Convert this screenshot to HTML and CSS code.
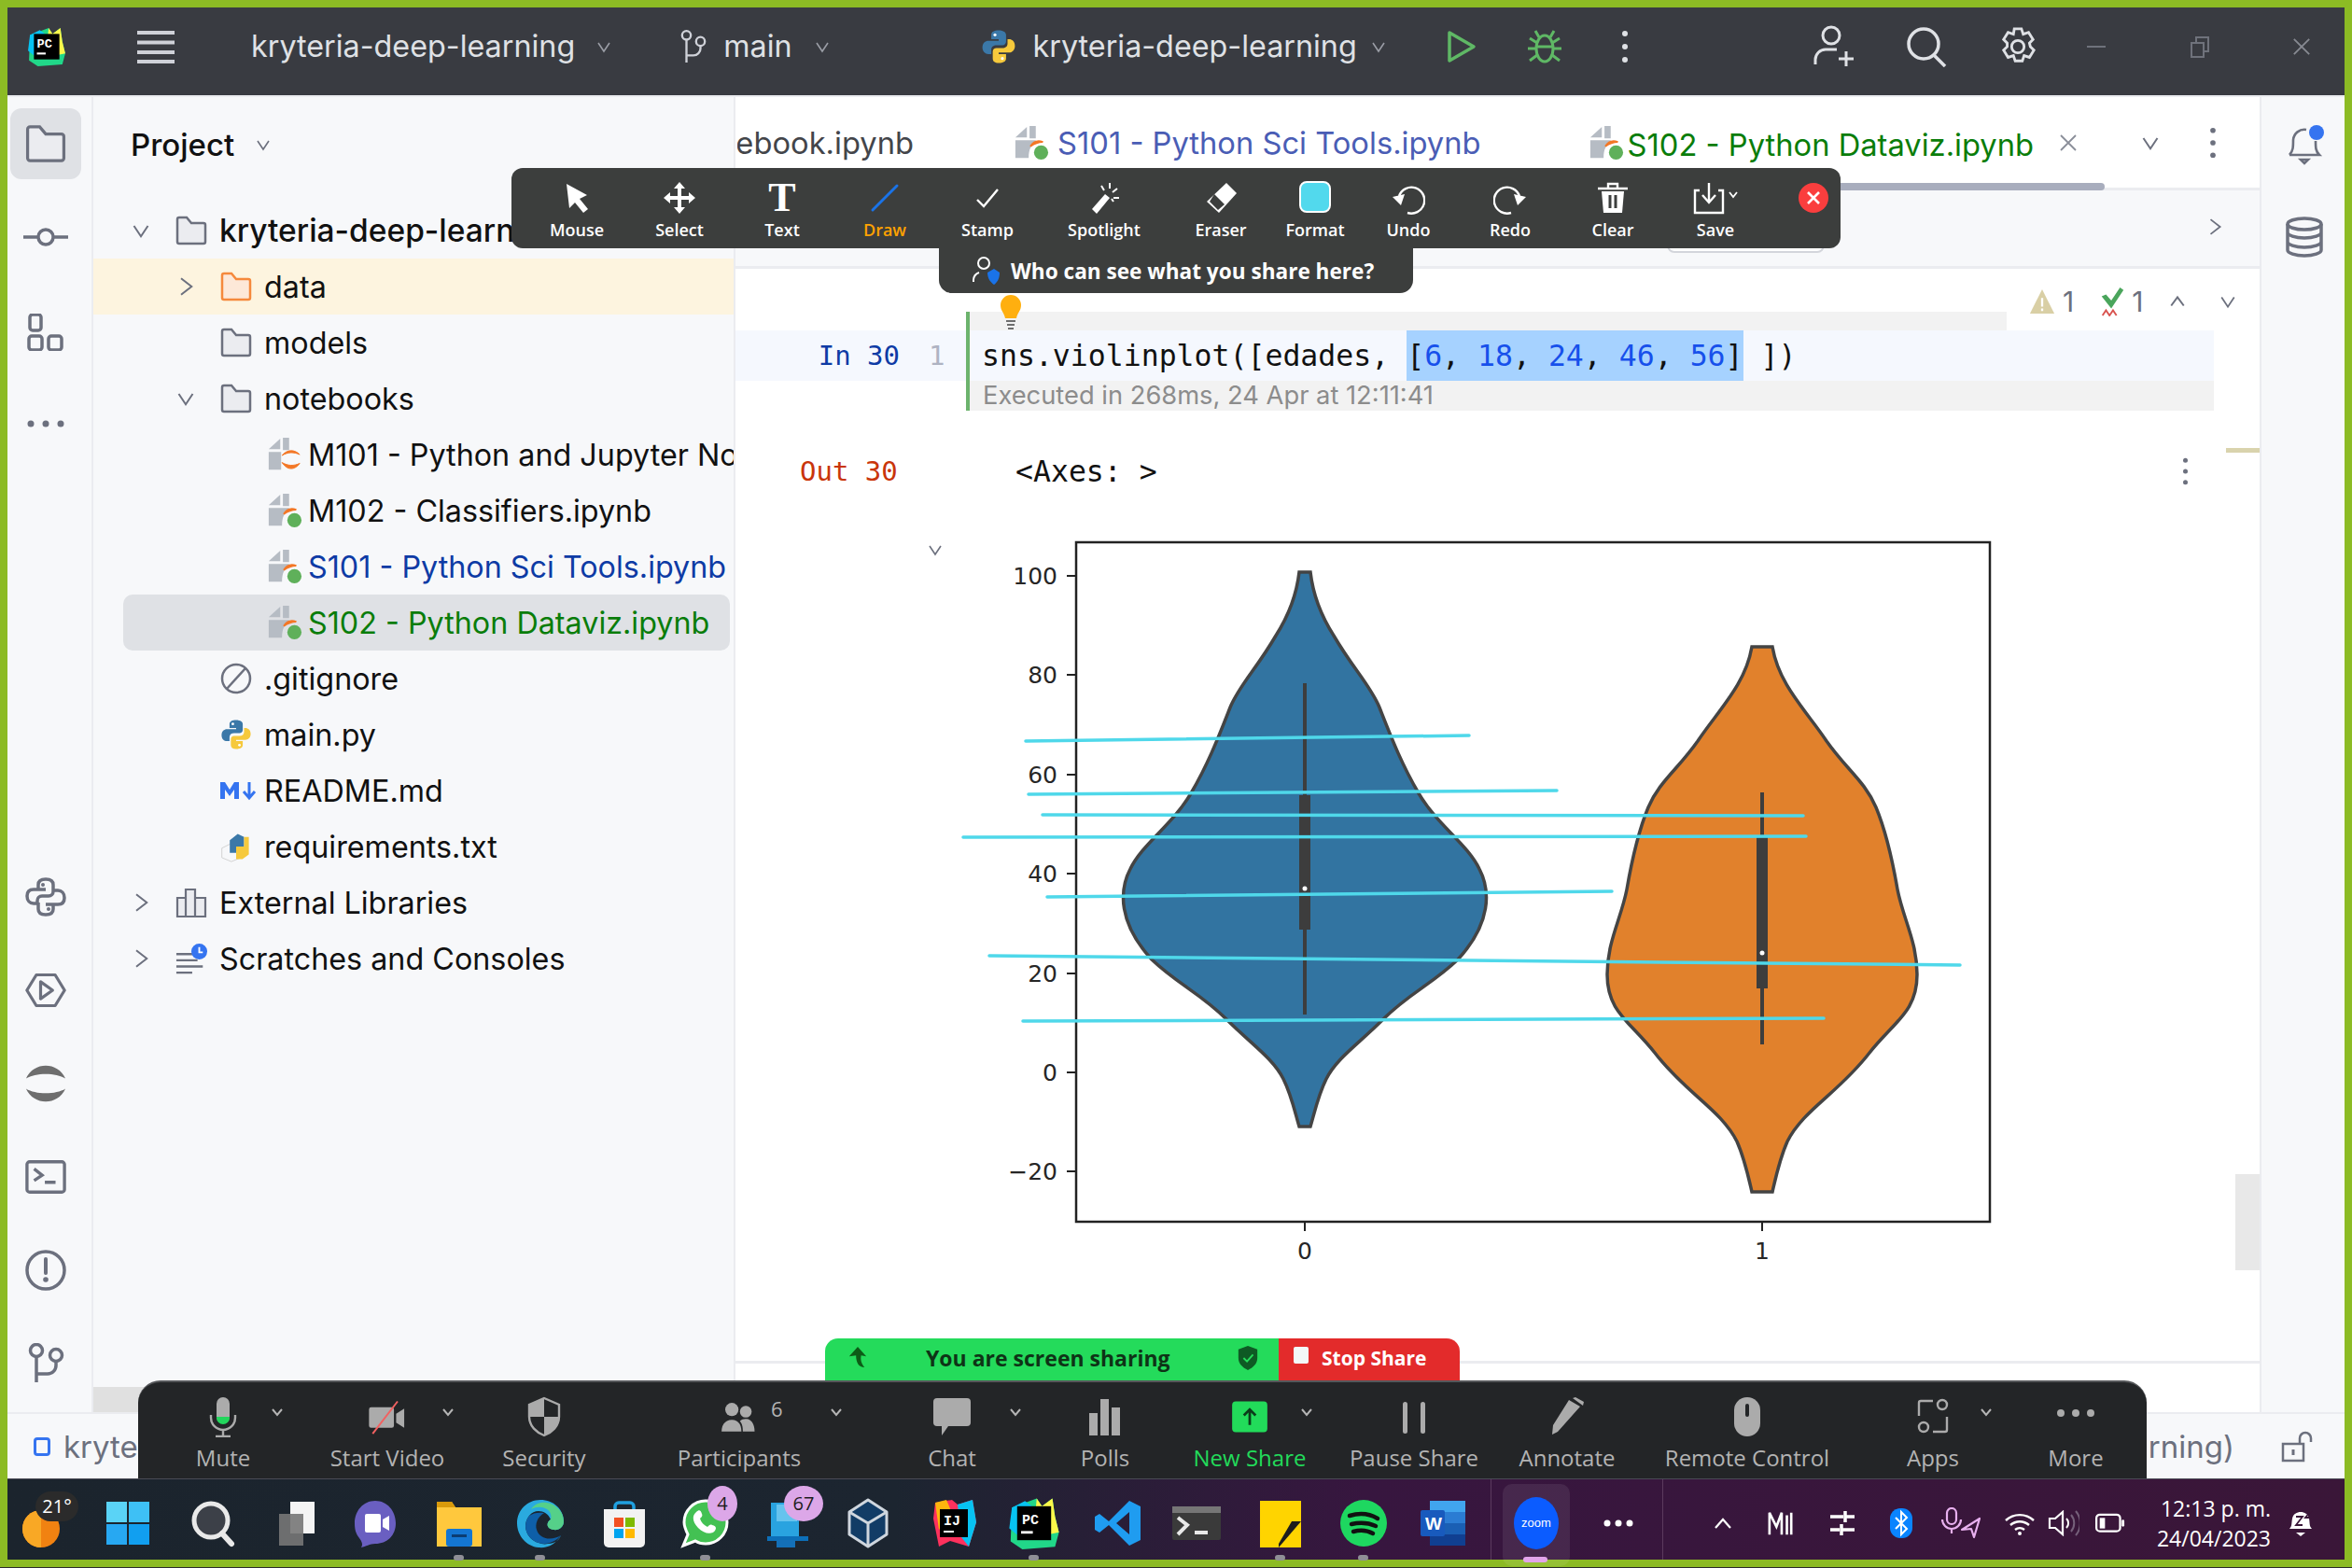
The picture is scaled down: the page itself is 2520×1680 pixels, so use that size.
FILE: index.html
```html
<!DOCTYPE html>
<html lang="en">
<head>
<meta charset="UTF-8">
<title>PyCharm screen share</title>
<link rel="stylesheet" href="styles.css">
</head>
<body>
<svg class="defs" width="0" height="0">
  <symbol id="down" viewBox="0 0 16 16"><path d="M2 4l6 9 6-9" fill="none" stroke="currentColor" stroke-width="1.6"/></symbol>
  <symbol id="right" viewBox="0 0 16 16"><path d="M4 1l9 7-9 7" fill="none" stroke="currentColor" stroke-width="1.6"/></symbol>
  <symbol id="folder" viewBox="0 0 34 34"><path d="M2 5a2 2 0 0 1 2-2h8l5 6h13a2 2 0 0 1 2 2v18a2 2 0 0 1-2 2H4a2 2 0 0 1-2-2z" fill="#ebecf0" stroke="#6c707e" stroke-width="2.5"/></symbol>
  <symbol id="nb" viewBox="0 0 40 40"><path d="M2 14L15 2v12zM18 1h7v14H18zM2 17h23v3c-5 2-8 7-8 17H2z" fill="#b6bcc4"/><path d="M19 24c3-5 8-7 14-5-5 0-10 2-14 5z" fill="#f37726" stroke="#f37726" stroke-width="2"/><circle cx="31" cy="31" r="8" fill="#5fb05a"/></symbol>
  <symbol id="py" viewBox="0 0 24 24"><path d="M12 1C9 1 7 2 7 4v3h5v1H5C3 8 1 9.500 1 12.500S3 17 5 17h2v-3c0-2 1.500-3 3.500-3h4c1.500 0 2.500-1 2.500-2.500V4c0-2-2.500-3-5-3z" fill="#3b78a8"/><path d="M12 23c3 0 5-1 5-3v-3h-5v-1h7c2 0 4-1.500 4-4.500S21 7 19 7h-1v3c0 2-1.500 3-3.500 3h-4C9 13 8 14 8 15.500V20c0 2 1.500 3 4 3z" fill="#f6c93c"/><circle cx="9.500" cy="4" r="1" fill="#fff"/><circle cx="14.500" cy="20" r="1" fill="#fff"/></symbol>
  <symbol id="pc" viewBox="0 0 40 40"><path d="M3 8L22 1l4 6 8-6 2 14 3 12-3 11-25 2-9-6z" fill="#21d789"/><path d="M22 1l4 6 8-6 2 14 3 12-20 4z" fill="#fcf84a"/><path d="M3 8l10-5 8 6-14 20-6-5z" fill="#07c3f2"/><rect x="7" y="7" width="26" height="26" fill="#000"/><rect x="10" y="26" width="9" height="2" fill="#fff"/></symbol>
</svg>

<div class="titlebar">
  <svg class="t-logo" viewBox="0 0 40 40"><use href="#pc"/><text x="10" y="21" class="pc-text">PC</text></svg>
  <svg class="t-menu" viewBox="0 0 40 40"><path d="M0 5h40M0 15.500h40M0 26h40M0 36h40" stroke="#cfd1d8" stroke-width="4"/></svg>
  <span class="t-name t-project">kryteria-deep-learning</span>
  <svg class="t-chev t-chev-a"><use href="#down"/></svg>
  <svg class="t-branch" viewBox="0 0 32 40"><path d="M8 12v26M8 30h8a8 8 0 0 0 8-8v-2" fill="none" stroke="#cfd1d8" stroke-width="2.500"/><circle cx="8" cy="7" r="5" fill="none" stroke="#cfd1d8" stroke-width="2.500"/><circle cx="24" cy="14" r="5" fill="none" stroke="#cfd1d8" stroke-width="2.500"/></svg>
  <span class="t-name">main</span>
  <svg class="t-chev t-chev-b"><use href="#down"/></svg>
  <svg class="t-py"><use href="#py"/></svg>
  <span class="t-name">kryteria-deep-learning</span>
  <svg class="t-chev t-chev-c"><use href="#down"/></svg>
  <svg class="t-run" viewBox="0 0 34 36"><path d="M4 3l26 15L4 33z" fill="none" stroke="#5fb865" stroke-width="3.500" stroke-linejoin="round"/></svg>
  <svg class="t-bug" viewBox="0 0 38 38"><g fill="none" stroke="#5fb865" stroke-width="3"><ellipse cx="19" cy="21" rx="9" ry="14"/><path d="M10 19h18M13 9l-4-7M25 9l4-7M1 21h9M28 21h9M3 10l8 5M35 10l-8 5M3 34l8-6M35 34l-8-6"/></g></svg>
  <svg class="t-dots" viewBox="0 0 8 36"><circle cx="4" cy="4" r="3" fill="#dfe1e5"/><circle cx="4" cy="18" r="3" fill="#dfe1e5"/><circle cx="4" cy="32" r="3" fill="#dfe1e5"/></svg>
  <svg class="t-user" viewBox="0 0 46 46"><g fill="none" stroke="#dfe1e5" stroke-width="3"><circle cx="20" cy="11" r="9"/><path d="M3 42v-5a11 11 0 0 1 11-11h12M36 28v16M28 36h16"/></g></svg>
  <svg class="t-search" viewBox="0 0 44 44"><g fill="none" stroke="#dfe1e5" stroke-width="3.500"><circle cx="19" cy="19" r="16"/><path d="M30 31l12 12"/></g></svg>
  <svg class="t-gear" viewBox="0 0 44 44"><g fill="none" stroke="#dfe1e5" stroke-width="3"><circle cx="22" cy="22" r="7"/><path d="M18 2h8l2 6 6-2 5 8-4 4 1 4 4 4-5 8-6-2-2 6h-8l-2-6-6 2-5-8 4-4 0-4-4-4 5-8 6 2z"/></g></svg>
  <span class="t-min"></span>
  <svg class="t-restore" viewBox="0 0 24 24"><path d="M3 8h13v15H3zM8 8V2h13v15h-5" fill="none" stroke="#6f727b" stroke-width="2"/></svg>
  <svg class="t-close" viewBox="0 0 22 22"><path d="M2 2l18 18M20 2L2 20" stroke="#878a92" stroke-width="2"/></svg>
</div>

<div class="main">
  <div class="strip-left">
    <div class="strip-group">
      <div class="strip-active"><svg class="s-icon" viewBox="0 0 34 34"><use href="#folder"/></svg></div>
      <svg class="s-icon s-commit" viewBox="0 0 50 34"><g fill="none" stroke="#6c707e" stroke-width="3.500"><circle cx="25" cy="17" r="8"/><path d="M1 17h16M33 17h16"/></g></svg>
      <svg class="s-icon s-plug" viewBox="0 0 40 40"><g fill="none" stroke="#6c707e" stroke-width="3.500"><rect x="3" y="1" width="12" height="17" rx="3"/><rect x="2" y="24" width="14" height="15" rx="3"/><rect x="23" y="24" width="14" height="15" rx="3"/></g></svg>
      <svg class="s-icon s-more" viewBox="0 0 40 8"><circle cx="4" cy="4" r="3.500" fill="#6c707e"/><circle cx="20" cy="4" r="3.500" fill="#6c707e"/><circle cx="36" cy="4" r="3.500" fill="#6c707e"/></svg>
    </div>
    <div class="strip-group">
      <svg class="s-icon" viewBox="0 0 44 44"><g fill="none" stroke="#6c707e" stroke-width="3.500"><path d="M14 14V9c0-4 3-6 8-6s8 2 8 6v7c0 3-2 5-5 5h-7c-3 0-5 2-5 5v3H9c-4 0-7-3-7-8s3-7 7-7h13"/><path d="M30 30v5c0 4-3 6-8 6s-8-2-8-6v-7M30 15h5c4 0 7 3 7 8s-3 7-7 7H22"/></g><circle cx="19" cy="9" r="2" fill="#6c707e"/><circle cx="25" cy="35" r="2" fill="#6c707e"/></svg>
      <svg class="s-icon s-gap" viewBox="0 0 48 40"><g fill="none" stroke="#6c707e" stroke-width="3.500" stroke-linejoin="round"><path d="M13 2h22l11 18-11 18H13L2 20z"/><path d="M18 10l14 10-14 10z"/></g></svg>
      <svg class="s-icon s-gap" viewBox="0 0 48 44"><path d="M1 16C10 -4 38 -4 47 16 36 9 12 9 1 16zM1 28C10 48 38 48 47 28 36 35 12 35 1 28z" fill="#6e6e6e"/></svg>
      <svg class="s-icon s-gap" viewBox="0 0 46 38"><g fill="none" stroke="#6c707e" stroke-width="3.500"><rect x="2" y="2" width="42" height="34" rx="3"/><path d="M10 10l9 7-9 6M22 25h12"/></g></svg>
      <svg class="s-icon s-gap" viewBox="0 0 44 44"><circle cx="22" cy="22" r="20" fill="none" stroke="#6c707e" stroke-width="3.500"/><path d="M22 10v15" stroke="#6c707e" stroke-width="4" stroke-linecap="round"/><circle cx="22" cy="32" r="2.800" fill="#6c707e"/></svg>
      <svg class="s-icon s-gap" viewBox="0 0 40 44"><g fill="none" stroke="#6c707e" stroke-width="3.500"><circle cx="10" cy="8" r="6.500"/><circle cx="31" cy="13" r="6.500"/><path d="M10 15v27M10 33h12a9 9 0 0 0 9-9v-4"/></g></svg>
    </div>
  </div>

  <div class="project">
    <div class="project-head"><span class="project-title">Project</span><svg class="p-chev"><use href="#down"/></svg></div>
    <div class="row"><svg class="chev"><use href="#down"/></svg><svg class="ico"><use href="#folder"/></svg><span class="bold-name">kryteria-deep-learning</span></div>
    <div class="row l2 excluded"><svg class="chev"><use href="#right"/></svg><svg class="ico" viewBox="0 0 34 34"><path d="M2 5a2 2 0 0 1 2-2h8l5 6h13a2 2 0 0 1 2 2v18a2 2 0 0 1-2 2H4a2 2 0 0 1-2-2z" fill="#fde8d8" stroke="#f5893c" stroke-width="2.500"/></svg><span>data</span></div>
    <div class="row l2"><span class="chev"></span><svg class="ico"><use href="#folder"/></svg><span>models</span></div>
    <div class="row l2"><svg class="chev"><use href="#down"/></svg><svg class="ico"><use href="#folder"/></svg><span>notebooks</span></div>
    <div class="row l3"><span class="chev"></span><svg class="ico" viewBox="0 0 40 40"><path d="M2 14L15 2v12zM18 1h7v14H18zM2 17h14v20H2z" fill="#b6bcc4"/><path d="M17 21c6-7 14-7 20-1-7-3-13-3-20 1zM17 29c6 9 14 9 20 1-7 3-13 3-20-1z" fill="#f37726" stroke="#f37726"/></svg><span>M101 - Python and Jupyter Notebook.ipynb</span></div>
    <div class="row l3"><span class="chev"></span><svg class="ico" viewBox="0 0 40 40"><use href="#nb"/></svg><span>M102 - Classifiers.ipynb</span></div>
    <div class="row l3 changed"><span class="chev"></span><svg class="ico" viewBox="0 0 40 40"><use href="#nb"/></svg><span>S101 - Python Sci Tools.ipynb</span></div>
    <div class="row l3 added selected"><span class="chev"></span><svg class="ico" viewBox="0 0 40 40"><use href="#nb"/></svg><span>S102 - Python Dataviz.ipynb</span></div>
    <div class="row l2"><span class="chev"></span><svg class="ico" viewBox="0 0 34 34"><circle cx="17" cy="17" r="15" fill="none" stroke="#6c707e" stroke-width="2.500"/><path d="M7 28L27 6" stroke="#6c707e" stroke-width="2.500"/></svg><span>.gitignore</span></div>
    <div class="row l2"><span class="chev"></span><svg class="ico"><use href="#py"/></svg><span>main.py</span></div>
    <div class="row l2"><span class="chev"></span><svg class="ico ico-md" viewBox="0 0 40 22"><path d="M1 20V2h5l5 8 5-8h5v18h-5V10l-5 7-5-7v10z" fill="#3574f0"/><path d="M32 2v15M26 12l6 7 6-7" fill="none" stroke="#3574f0" stroke-width="3"/></svg><span>README.md</span></div>
    <div class="row l2"><span class="chev"></span><svg class="ico" viewBox="0 0 40 40"><path d="M2 22l12-6 12 6v12l-12 5-12-5z" fill="none" stroke="#ccc" stroke-width="1"/><path d="M12 12l10-8 8 4v12H20v8h-8z" fill="#3b78a8"/><path d="M22 22h14V8l-6 0v12H20v16h8l8-6V22z" fill="#f6c93c"/></svg><span>requirements.txt</span></div>
    <div class="row"><svg class="chev"><use href="#right"/></svg><svg class="ico" viewBox="0 0 34 34"><path d="M2 12h9v20H2zM11 3h10v29H11zM21 12h11v20H21z" fill="#ebecf0" stroke="#6c707e" stroke-width="2.200"/></svg><span>External Libraries</span></div>
    <div class="row"><svg class="chev"><use href="#right"/></svg><svg class="ico" viewBox="0 0 36 34"><path d="M1 12h18M1 19h24M1 26h30M1 33h18" stroke="#6c707e" stroke-width="2.500"/><circle cx="27" cy="9" r="9" fill="#3574f0"/><path d="M27 4v6h4" stroke="#fff" stroke-width="2" fill="none"/></svg><span>Scratches and Consoles</span></div>
    <div class="project-scroll"></div>
  </div>

  <div class="editor">
    <div class="tabs">
      <div class="tab-clipped"><span>Notebook.ipynb</span></div>
      <svg class="tab-ico tab-ico-a" viewBox="0 0 40 40"><use href="#nb"/></svg><span class="tab-blue">S101 - Python Sci Tools.ipynb</span>
      <svg class="tab-ico tab-ico-b" viewBox="0 0 40 40"><use href="#nb"/></svg><span class="tab-green">S102 - Python Dataviz.ipynb</span>
      <svg class="tab-x" viewBox="0 0 20 20"><path d="M2 2l16 16M18 2L2 18" stroke="#8a8e99" stroke-width="1.800"/></svg>
      <svg class="tab-list"><use href="#down"/></svg>
      <svg class="tab-dots" viewBox="0 0 8 36"><circle cx="4" cy="4" r="3" fill="#6c707e"/><circle cx="4" cy="18" r="3" fill="#6c707e"/><circle cx="4" cy="32" r="3" fill="#6c707e"/></svg>
      <div class="tab-underline"></div>
    </div>
    <div class="nb-toolbar">
      <div class="nb-button"></div>
      <svg class="nb-next"><use href="#right"/></svg>
    </div>
    <div class="notebook">
      <div class="inspect">
        <svg class="in-warn" viewBox="0 0 30 30"><path d="M15 1l14 28H1z" fill="#d9cfa5"/><path d="M15 11v10M15 23v3" stroke="#fff" stroke-width="2.500"/></svg><span>1</span>
        <svg class="in-ok" viewBox="0 0 32 34"><path d="M4 11l5-2 6 7L25 1l4 3-14 21z" fill="#4aa55c"/><path d="M5 33l4-6 4 6 4-6 4 6" stroke="#d9534f" fill="none" stroke-width="2"/></svg><span>1</span>
        <svg class="in-up" viewBox="0 0 16 16"><path d="M2 12l6-8 6 8" fill="none" stroke="#6c707e" stroke-width="1.800"/></svg>
        <svg class="in-down"><use href="#down"/></svg>
      </div>
      <svg class="bulb" viewBox="0 0 24 40"><path d="M12 1a11 11 0 0 1 11 11c0 6-4 8-5 14H6C5 20 1 18 1 12A11 11 0 0 1 12 1z" fill="#ffaf0f"/><path d="M7 29h10M8 33h8M9 37h6" stroke="#6e6e6e" stroke-width="2"/></svg>
      <div class="cell-top"></div>
      <div class="cell-line">
        <span class="prompt">In 30</span><span class="lineno">1</span>
        <code class="code">sns.violinplot([edades, <span class="sel">[<i>6</i>, <i>18</i>, <i>24</i>, <i>46</i>, <i>56</i>]</span> ])</code>
      </div>
      <div class="exec">Executed in 268ms, 24 Apr at 12:11:41</div>
      <div class="out-row">
        <span class="out-prompt">Out 30</span>
        <code class="out-text">&lt;Axes: &gt;</code>
        <svg class="out-dots" viewBox="0 0 8 36"><circle cx="4" cy="4" r="3" fill="#6c707e"/><circle cx="4" cy="18" r="3" fill="#6c707e"/><circle cx="4" cy="32" r="3" fill="#6c707e"/></svg>
      </div>
      <div class="plot-row">
        <svg class="plot-fold"><use href="#down"/></svg>
        <svg class="plot" viewBox="1020 570 1160 790">
          <rect x="1153" y="582" width="979" height="728" fill="#fff" stroke="#222" stroke-width="2.500"/>
          <g stroke="#222" stroke-width="2">
            <path d="M1143 618h10M1143 724h10M1143 831h10M1143 937h10M1143 1044h10M1143 1150h10M1143 1256h10M1398 1310v10M1888 1310v10"/>
          </g>
          <g class="tick" text-anchor="end">
            <text x="1133" y="627">100</text><text x="1133" y="733">80</text><text x="1133" y="840">60</text><text x="1133" y="946">40</text><text x="1133" y="1053">20</text><text x="1133" y="1159">0</text><text x="1133" y="1265">−20</text>
          </g>
          <g class="tick" text-anchor="middle"><text x="1398" y="1350">0</text><text x="1888" y="1350">1</text></g>
          <path d="M1392 614L1404 614C1407 640 1415 660 1429 682C1450 718 1468 735 1478 759C1492 795 1503 822 1520 851C1540 885 1572 905 1585 932C1597 955 1598 990 1562 1029C1535 1055 1510 1065 1482 1093C1455 1120 1432 1135 1421 1157C1412 1175 1408 1195 1404 1208L1392 1208C1388 1195 1384 1175 1375 1157C1364 1135 1341 1120 1314 1093C1286 1065 1261 1055 1234 1029C1198 990 1199 955 1211 932C1224 905 1256 885 1276 851C1293 822 1304 795 1318 759C1328 735 1346 718 1367 682C1381 660 1389 640 1392 614Z" fill="#3274a1" stroke="#444" stroke-width="3.500"/>
          <path d="M1877 694L1899 694C1906 735 1935 762 1957 795C1978 825 1998 838 2010 866C2020 890 2028 925 2033 954C2039 985 2054 1010 2054 1045C2054 1085 2030 1095 2003 1129C1970 1172 1932 1190 1915 1224C1907 1242 1903 1260 1899 1278L1877 1278C1873 1260 1869 1242 1861 1224C1844 1190 1806 1172 1773 1129C1746 1095 1722 1085 1722 1045C1722 1010 1737 985 1743 954C1748 925 1756 890 1766 866C1778 838 1798 825 1819 795C1841 762 1870 735 1877 694Z" fill="#e1812c" stroke="#444" stroke-width="3.500"/>
          <path d="M1398 733V1088M1888 850V1120" stroke="#3d3d3d" stroke-width="4"/>
          <path d="M1398 853V997M1888 898V1060" stroke="#3d3d3d" stroke-width="12"/>
          <circle cx="1398" cy="953" r="2.500" fill="#fff"/><circle cx="1888" cy="1022" r="2.500" fill="#fff"/>
          <g stroke="#4fd8ea" stroke-width="3.500" stroke-linecap="round">
            <path d="M1099 795L1574 789M1102 852L1668 848M1117 874L1932 875M1032 898L1935 897M1122 962L1727 956M1060 1025L2100 1035M1096 1095L1954 1092"/>
          </g>
        </svg>
      </div>
      <div class="margin-mark"></div>
      <div class="v-scroll"></div>
      <div class="nb-foot"></div>
    </div>
  </div>

  <div class="strip-right">
    <svg class="r-bell" viewBox="0 0 44 44"><path d="M6 33c4-4 4-9 4-16a12 12 0 0 1 14-11M34 18c0 7 0 11 4 15H6M18 38h8l-4 4z" fill="none" stroke="#6c707e" stroke-width="2.600"/><circle cx="35" cy="9" r="8" fill="#3574f0"/></svg>
    <svg class="r-db" viewBox="0 0 40 44"><g fill="none" stroke="#6c707e" stroke-width="3.500"><ellipse cx="20" cy="8" rx="18" ry="6"/><path d="M2 8v28c0 3 8 6 18 6s18-3 18-6V8M2 17c0 3 8 6 18 6s18-3 18-6M2 27c0 3 8 6 18 6s18-3 18-6"/></g></svg>
  </div>
</div>

<div class="statusbar">
  <span class="st-left"><span class="st-box"></span>kryteria</span>
  <span class="st-right">rning)</span>
  <svg class="st-lock" viewBox="0 0 34 34"><path d="M2 14h22v18H2z" fill="none" stroke="#6c707e" stroke-width="2.500"/><path d="M13 20v6" stroke="#6c707e" stroke-width="3"/><path d="M20 14V8a6 6 0 0 1 12 0v4" fill="none" stroke="#6c707e" stroke-width="2.500"/></svg>
</div>

<div class="taskbar">
  <div class="tb-apps">
    <div class="tb-slot"><svg viewBox="0 0 56 56"><circle cx="27" cy="34" r="20" fill="#f18211"/><path d="M27 14a20 20 0 0 0 0 40z" fill="#f9a825"/></svg><span class="tb-temp">21°</span></div>
    <div class="tb-slot"><svg viewBox="0 0 56 56"><path d="M5 5h22v22H5z" fill="#5ad3f6"/><path d="M29 5h22v22H29z" fill="#3ec0f5"/><path d="M5 29h22v22H5z" fill="#27a8f2"/><path d="M29 29h22v22H29z" fill="#119ff0"/></svg></div>
    <div class="tb-slot"><svg viewBox="0 0 56 56"><circle cx="25" cy="25" r="18" fill="#3c4048" stroke="#e9e9e9" stroke-width="5"/><path d="M37 39l10 11" stroke="#e9e9e9" stroke-width="6" stroke-linecap="round"/></svg></div>
    <div class="tb-slot"><svg viewBox="0 0 56 56"><rect x="22" y="5" width="26" height="34" fill="#f4f4f4"/><rect x="10" y="18" width="26" height="34" fill="#777" opacity=".9"/></svg></div>
    <div class="tb-slot"><svg viewBox="0 0 56 56"><path d="M28 4c13 0 22 11 22 24s-9 22-22 22c-6 0-10 3-15 4 2-3 1-6-2-10C7 39 6 34 6 28 6 15 15 4 28 4z" fill="#6a5fc1"/><rect x="17" y="18" width="17" height="20" rx="2" fill="#fff"/><path d="M36 24l7-4v16l-7-4z" fill="#fff"/></svg></div>
    <div class="tb-slot"><svg viewBox="0 0 56 56"><path d="M4 5h16l4 6h28v42H4z" fill="#ffc83d"/><path d="M4 5h16l4 6H4z" fill="#d99a0b"/><rect x="14" y="34" width="28" height="19" rx="3" fill="#1476d2"/><rect x="20" y="40" width="16" height="3" fill="#0b3d73"/></svg><span class="tb-run"></span></div>
    <div class="tb-slot"><svg viewBox="0 0 56 56"><path d="M28 3c14 0 25 10 25 23 0 6-5 10-11 9-8-1-8-8-3-11C35 14 22 12 16 20 8 30 13 45 26 49c3 1 6 2 10 1 9 0 13-6 14-9-5 9-14 14-24 13C13 53 3 41 3 28 3 14 14 3 28 3z" fill="#2aaadf"/><path d="M53 26c0 6-5 10-11 9-8-1-8-8-3-11 3-10-9-17-21-11C28 -2 53 8 53 26z" fill="#55d089"/><path d="M16 20C8 30 13 45 26 49c10 3 19-2 24-8-8 5-22 6-26-6-2-6 1-14 8-18-6-1-12 0-16 3z" fill="#0e5fa8"/></svg><span class="tb-run"></span></div>
    <div class="tb-slot"><svg viewBox="0 0 56 56"><path d="M18 16v-6a4 4 0 0 1 4-4h12a4 4 0 0 1 4 4v6" fill="none" stroke="#20a0e0" stroke-width="3.500"/><path d="M6 13h44v36a5 5 0 0 1-5 5H11a5 5 0 0 1-5-5z" fill="#f2f2f2"/><rect x="17" y="22" width="10" height="10" fill="#f25022"/><rect x="29" y="22" width="10" height="10" fill="#7fba00"/><rect x="17" y="34" width="10" height="10" fill="#00a4ef"/><rect x="29" y="34" width="10" height="10" fill="#ffb900"/></svg></div>
    <div class="tb-slot"><svg viewBox="0 0 56 56"><path d="M28 4a23 23 0 0 1 0 46c-4 0-8-1-11-3L4 52l5-12C7 36 5 32 5 27A23 23 0 0 1 28 4z" fill="#43c153" stroke="#fff" stroke-width="3"/><path d="M18 16c3-3 5-2 6 2 1 2 0 3-2 5 1 4 4 7 8 9 2-2 3-3 5-2 4 1 5 3 3 6-4 5-12 3-18-3-6-6-7-13-2-17z" fill="#fff"/></svg><span class="tb-badge tb-badge-a">4</span><span class="tb-run"></span></div>
    <div class="tb-slot"><svg viewBox="0 0 56 56"><path d="M10 6h30v40H10z" fill="#29a3e0"/><path d="M6 42h44v5H6z" fill="#0c6fb8"/><path d="M16 46h20v8H16z" fill="#1470b8"/><path d="M16 8h22v18H16z" fill="#66c3ee"/></svg><span class="tb-badge tb-badge-b">67</span></div>
    <div class="tb-slot"><svg viewBox="0 0 56 56"><path d="M28 3l20 13v24L28 53 8 40V16z" fill="#123c66" stroke="#cfd6de" stroke-width="3" stroke-linejoin="round"/><path d="M8 16l20 12 20-12M28 28v25" fill="none" stroke="#cfd6de" stroke-width="3"/></svg></div>
    <div class="tb-slot"><svg viewBox="0 0 56 56"><path d="M8 6l18-3 6 5 16-5 4 24-8 26-20-6-12 6-6-30z" fill="#fe315d"/><path d="M32 8l16-5 4 24-8 26-8-10z" fill="#07c3f2"/><path d="M8 6l12-3 6 14-14 18z" fill="#fdb60d"/><rect x="13" y="13" width="30" height="30" fill="#000"/><text x="17" y="30" class="ide-text">IJ</text><rect x="17" y="36" width="11" height="2" fill="#fff"/></svg></div>
    <div class="tb-slot"><svg viewBox="0 0 56 56"><use href="#pc" width="56" height="56"/><text x="15" y="29" class="ide-text">PC</text></svg><span class="tb-run"></span></div>
    <div class="tb-slot"><svg viewBox="0 0 56 56"><path d="M40 4l12 6v36l-12 6-22-22-10 8-5-3V21l5-3 10 8zM40 16L26 28l14 12z" fill="#1f9cf0"/></svg></div>
    <div class="tb-slot"><svg viewBox="0 0 56 56"><rect x="0" y="10" width="52" height="36" rx="2" fill="#3a3a3a"/><path d="M0 10h52v7H0z" fill="#767676"/><path d="M6 22l10 8-10 10" fill="none" stroke="#e8e8e8" stroke-width="4"/><rect x="24" y="36" width="14" height="4" fill="#e8e8e8"/></svg></div>
    <div class="tb-slot"><svg viewBox="0 0 56 56"><rect x="6" y="4" width="44" height="50" fill="#ffd400"/><path d="M26 54l24-28h-10L26 50z" fill="#1d1d1d"/></svg><span class="tb-run"></span></div>
    <div class="tb-slot"><svg viewBox="0 0 56 56"><circle cx="28" cy="28" r="25" fill="#1ed760"/><g fill="none" stroke="#111" stroke-width="4.500" stroke-linecap="round"><path d="M13 20c10-3 20-3 30 3M15 29c9-2 17-2 26 2M17 37c7-2 14-2 21 2"/></g></svg><span class="tb-run"></span></div>
    <div class="tb-slot"><svg viewBox="0 0 56 56"><path d="M12 4h38v48H12z" fill="#1a5fb4"/><path d="M12 4h38v12H12z" fill="#41a5ee"/><path d="M12 16h38v12H12z" fill="#2b7cd3"/><path d="M12 40h38v12H12z" fill="#103f91"/><rect x="2" y="14" width="26" height="28" rx="2" fill="#185abd"/><text x="7" y="35" class="word-text">W</text></svg></div>
    <div class="tb-slot tb-active"><svg viewBox="0 0 56 56"><ellipse cx="28" cy="28" rx="24" ry="28" fill="#0b5cff"/><text x="28" y="32" class="zoom-text">zoom</text></svg><span class="tb-run tb-run-zoom"></span></div>
    <div class="tb-slot"><svg viewBox="0 0 56 56"><circle cx="16" cy="28" r="3.500" fill="#fff"/><circle cx="28" cy="28" r="3.500" fill="#fff"/><circle cx="40" cy="28" r="3.500" fill="#fff"/></svg></div>
  </div>
  <div class="tb-sep tb-sep-a"></div>
  <div class="tb-sep tb-sep-b"></div>
  <div class="tray">
    <svg class="tr-up" viewBox="0 0 20 14"><path d="M2 12l8-9 8 9" fill="none" stroke="#fff" stroke-width="2.200"/></svg>
    <svg class="tr-m" viewBox="0 0 30 30"><path d="M2 28V3l8 16 6-16v25M22 6v22M27 3v25" fill="none" stroke="#fff" stroke-width="2.800"/></svg>
    <svg class="tr-sl" viewBox="0 0 30 30"><path d="M2 8h14M18 2v12M18 8h10M2 22h10M14 16v12M14 22h14" fill="none" stroke="#fff" stroke-width="3.500"/></svg>
    <svg class="tr-bt" viewBox="0 0 24 32"><rect width="24" height="32" rx="11" fill="#0a84ff"/><path d="M6 10l12 12-6 6V4l6 6L6 22" fill="none" stroke="#fff" stroke-width="2"/></svg>
    <svg class="tr-mic" viewBox="0 0 44 34"><g fill="none" stroke="#e8b0ef" stroke-width="2.200"><rect x="6" y="1" width="10" height="17" rx="5"/><path d="M1 13a10 10 0 0 0 20 0M11 23v5M22 24L41 12l-6 20-3-9z" stroke-linejoin="round"/></g></svg>
    <svg class="tr-wifi" viewBox="0 0 34 26"><g fill="none" stroke="#fff" stroke-width="2.400"><path d="M2 10a22 22 0 0 1 30 0M7 15a15 15 0 0 1 20 0M12 20a8 8 0 0 1 10 0"/></g><circle cx="17" cy="24" r="2" fill="#fff"/></svg>
    <svg class="tr-vol" viewBox="0 0 34 28"><path d="M2 9h6l8-7v24l-8-7H2z" fill="none" stroke="#fff" stroke-width="2.200"/><path d="M20 9a7 7 0 0 1 0 10" fill="none" stroke="#fff" stroke-width="2"/><path d="M25 5a14 14 0 0 1 0 18M30 1a20 20 0 0 1 0 26" fill="none" stroke="#75607a" stroke-width="2"/></svg>
    <svg class="tr-bat" viewBox="0 0 34 22"><rect x="1.200" y="1.200" width="27" height="19" rx="4" fill="none" stroke="#fff" stroke-width="2.400"/><rect x="5" y="5" width="6" height="12" fill="#fff"/><rect x="30" y="7" width="3" height="8" rx="1.500" fill="#fff"/></svg>
    <div class="tr-clock"><span>12:13 p. m.</span><span>24/04/2023</span></div>
    <svg class="tr-bell" viewBox="0 0 28 32"><path d="M2 22c3-3 2-6 3-11 1-5 5-7 9-7s8 2 9 7c1 5 0 8 3 11z" fill="#fff"/><path d="M9 26h10l-5 4z" fill="#fff"/><path d="M9 9h7l-7 9h7M19 3h6l-6 7h6" fill="none" stroke="#3a1638" stroke-width="1.800"/></svg>
  </div>
</div>

<!-- screen share overlays -->
<div class="annot">
  <div class="an-item"><svg viewBox="0 0 36 36"><path d="M7 3l22 12-8 4 9 11-5 4-9-11-6 6z" fill="#fff"/></svg><span>Mouse</span></div>
  <div class="an-item"><svg viewBox="0 0 36 36"><path d="M18 1l6 7h-4v8h8v-4l7 6-7 6v-4h-8v8h4l-6 7-6-7h4v-8H8v4l-7-6 7-6v4h8V8h-4z" fill="#fff"/></svg><span>Select</span></div>
  <div class="an-item"><b class="an-t">T</b><span>Text</span></div>
  <div class="an-item an-draw"><svg viewBox="0 0 36 36"><path d="M5 31L31 5" stroke="#1a73e8" stroke-width="3" stroke-linecap="round"/></svg><span>Draw</span></div>
  <div class="an-item"><svg viewBox="0 0 36 36"><path d="M7 20l7 7L29 9" fill="none" stroke="#fff" stroke-width="2.400"/></svg><span>Stamp</span></div>
  <div class="an-item"><svg viewBox="0 0 36 36"><path d="M5 30l14-16 5 4-14 17z" fill="#fff"/><path d="M24 2v6M32 8l-5 4M34 18h-6M15 5l3 5M28 22l-2-3" stroke="#fff" stroke-width="2"/></svg><span>Spotlight</span></div>
  <div class="an-item"><svg viewBox="0 0 36 36"><path d="M24 2l11 11-19 21L3 22z" fill="#fff"/><path d="M11 14l11 11-7 6-9-9z" fill="#3c3e3d"/></svg><span>Eraser</span></div>
  <div class="an-item"><span class="an-swatch"></span><span>Format</span></div>
  <div class="an-item"><svg viewBox="0 0 36 36"><path d="M8 16a14 14 0 1 1 9 18" fill="none" stroke="#fff" stroke-width="2.400"/><path d="M1 17l13-3-4 12z" fill="#fff"/></svg><span>Undo</span></div>
  <div class="an-item"><svg viewBox="0 0 36 36"><path d="M28 16a14 14 0 1 0-9 18" fill="none" stroke="#fff" stroke-width="2.400"/><path d="M35 17l-13-3 4 12z" fill="#fff"/></svg><span>Redo</span></div>
  <div class="an-item"><svg viewBox="0 0 36 36"><path d="M2 8h32M13 7V3h10v4" fill="none" stroke="#fff" stroke-width="2.400"/><path d="M6 11h24l-2 23H8z" fill="#fff"/><path d="M15 15v14M21 15v14" stroke="#3c3e3d" stroke-width="3"/></svg><span>Clear</span></div>
  <div class="an-item"><svg class="an-save" viewBox="0 0 50 36"><path d="M8 10H3v24h30V10h-5" fill="none" stroke="#fff" stroke-width="2.400"/><path d="M18 2v20M11 15l7 8 7-8" fill="none" stroke="#fff" stroke-width="2.400"/><path d="M40 12l4 5 4-5" fill="none" stroke="#fff" stroke-width="1.800"/></svg><span>Save</span></div>
  <svg class="an-close" viewBox="0 0 32 32"><circle cx="16" cy="16" r="16" fill="#fa3e3e"/><path d="M10 10l12 12M22 10L10 22" stroke="#fff" stroke-width="2.600"/></svg>
</div>
<div class="annot-tip">
  <svg viewBox="0 0 32 32"><circle cx="14" cy="8" r="6" fill="none" stroke="#fff" stroke-width="2"/><path d="M3 28v-2a9 9 0 0 1 6-8" fill="none" stroke="#fff" stroke-width="2"/><path d="M18 18l7-4 6 4c0 7-3 11-6 13-3-2-7-6-7-13z" fill="#1a73e8"/></svg>
  <span>Who can see what you share here?</span>
</div>

<div class="share-banner">
  <div class="share-green">
    <svg class="share-arrow" viewBox="0 0 24 28"><path d="M2 12L12 1l10 11-6-1c-1 5 0 9 4 14-7 0-10-6-10-14z" fill="#0d5c17"/></svg>
    <span class="share-text">You are screen sharing</span>
    <svg class="share-shield" viewBox="0 0 26 30"><path d="M13 1l11 4v10c0 7-5 11-11 14C7 26 2 22 2 15V5z" fill="#0e5a24"/><path d="M8 15l4 4 7-8" fill="none" stroke="#25db5a" stroke-width="2"/></svg>
  </div>
  <div class="share-red"><span class="share-stop"></span><span>Stop Share</span></div>
</div>

<div class="zoom-bar">
  <div class="zb-item">
    <svg viewBox="0 0 44 44"><rect x="15" y="1" width="14" height="28" rx="7" fill="#ababab"/><path d="M15 22h14v1a7 7 0 0 1-14 0z" fill="#22d65c"/><path d="M9 20v3a13 13 0 0 0 26 0v-3M22 36v6M14 43h16" fill="none" stroke="#ababab" stroke-width="2.400"/></svg>
    <span>Mute</span><svg class="zb-caret zc-mute" viewBox="0 0 12 10"><path d="M1 2l5 6 5-6" fill="none" stroke="#b5b5b5" stroke-width="2"/></svg>
  </div>
  <div class="zb-item">
    <svg class="zb-wide" viewBox="0 0 56 44"><path d="M6 9h28a3 3 0 0 1 3 3v22a3 3 0 0 1-3 3H6a3 3 0 0 1-3-3V12a3 3 0 0 1 3-3zM40 18l11-7v26l-11-7z" fill="#ababab"/><path d="M8 45L42 1" stroke="#f26161" stroke-width="2.500"/></svg>
    <span>Start Video</span><svg class="zb-caret zc-video" viewBox="0 0 12 10"><path d="M1 2l5 6 5-6" fill="none" stroke="#b5b5b5" stroke-width="2"/></svg>
  </div>
  <div class="zb-item">
    <svg viewBox="0 0 44 44"><path d="M22 2l16 7v13c0 10-8 17-16 20C14 39 6 32 6 22V9z" fill="none" stroke="#ababab" stroke-width="2.400"/><path d="M22 2v20H6V9zM22 22h16c0 10-8 17-16 20z" fill="#ababab"/></svg>
    <span>Security</span>
  </div>
  <div class="zb-item">
    <svg class="zb-wide" viewBox="0 0 56 44"><circle cx="18" cy="12" r="9" fill="#ababab"/><circle cx="37" cy="15" r="8" fill="#ababab"/><path d="M4 42c0-10 6-16 14-16s13 6 13 16zM33 42c0-6-1-11-4-14 2-2 5-3 8-3 7 0 12 6 12 17z" fill="#ababab"/></svg>
    <span>Participants</span><span class="zb-count">6</span><svg class="zb-caret zc-part" viewBox="0 0 12 10"><path d="M1 2l5 6 5-6" fill="none" stroke="#b5b5b5" stroke-width="2"/></svg>
  </div>
  <div class="zb-item">
    <svg viewBox="0 0 44 44"><path d="M6 2h32a4 4 0 0 1 4 4v22a4 4 0 0 1-4 4H18l-7 10v-10H6a4 4 0 0 1-4-4V6a4 4 0 0 1 4-4z" fill="#ababab"/></svg>
    <span>Chat</span><svg class="zb-caret zc-chat" viewBox="0 0 12 10"><path d="M1 2l5 6 5-6" fill="none" stroke="#b5b5b5" stroke-width="2"/></svg>
  </div>
  <div class="zb-item">
    <svg viewBox="0 0 44 44"><path d="M5 18h9v24H5zM17 3h9v39h-9zM29 12h9v30h-9z" fill="#ababab"/></svg>
    <span>Polls</span>
  </div>
  <div class="zb-item zb-green">
    <svg class="zb-wide" viewBox="0 0 56 44"><rect x="4" y="1" width="48" height="42" rx="5" fill="#22db5a"/><path d="M28 33V12M20 20l8-8 8 8" fill="none" stroke="#0b3b1a" stroke-width="3.500"/></svg>
    <span>New Share</span><svg class="zb-caret zc-new" viewBox="0 0 12 10"><path d="M1 2l5 6 5-6" fill="none" stroke="#b5b5b5" stroke-width="2"/></svg>
  </div>
  <div class="zb-item">
    <svg viewBox="0 0 44 44"><rect x="10" y="6" width="5" height="34" rx="2.500" fill="#ababab"/><rect x="29" y="6" width="5" height="34" rx="2.500" fill="#ababab"/></svg>
    <span>Pause Share</span>
  </div>
  <div class="zb-item">
    <svg viewBox="0 0 44 44"><path d="M12 38l-6 3 1-10L24 4l12 7zM28 2l3-1 9 5-1 4z" fill="#ababab"/></svg>
    <span>Annotate</span>
  </div>
  <div class="zb-item">
    <svg viewBox="0 0 44 44"><rect x="8" y="1" width="28" height="42" rx="14" fill="#ababab"/><rect x="20" y="8" width="4" height="14" rx="2" fill="#232527"/></svg>
    <span>Remote Control</span>
  </div>
  <div class="zb-item">
    <svg viewBox="0 0 44 44"><g fill="none" stroke="#ababab" stroke-width="2.400"><path d="M22 5H9a2 2 0 0 0-2 2v14M37 22v14a2 2 0 0 1-2 2H22"/><circle cx="32" cy="9" r="5"/><circle cx="12" cy="33" r="5"/></g></svg>
    <span>Apps</span><svg class="zb-caret zc-apps" viewBox="0 0 12 10"><path d="M1 2l5 6 5-6" fill="none" stroke="#b5b5b5" stroke-width="2"/></svg>
  </div>
  <div class="zb-item">
    <svg viewBox="0 0 44 44"><circle cx="6" cy="18" r="4" fill="#ababab"/><circle cx="22" cy="18" r="4" fill="#ababab"/><circle cx="38" cy="18" r="4" fill="#ababab"/></svg>
    <span>More</span>
  </div>
</div>
</body>
</html>
```

FILE: styles.css
```css
* { box-sizing: border-box; }

html, body { margin: 0; }

body {
  position: relative;
  width: 2520px;
  height: 1680px;
  padding: 8px 8px 8px;
  background: #8cbb24;
  border-bottom: 1px solid #2c2c2c;
  display: flex;
  flex-direction: column;
  overflow: hidden;
  font-family: Inter, "Noto Sans", sans-serif;
  color: #111;
}

.defs { position: absolute; }

/* title bar */
.titlebar {
  height: 94px;
  flex: none;
  background: #393b41;
  display: flex;
  align-items: center;
  padding-bottom: 10px;
  color: #dfe1e5;
}
.titlebar svg { flex: none; }
.t-name { font-size: 32.300px; line-height: 40px; white-space: nowrap; }
.t-logo { width: 42px; height: 42px; margin-left: 21px; }
.pc-text { font: bold 13px "Liberation Mono", monospace; fill: #fff; }
.t-menu { width: 40px; height: 40px; margin-left: 76px; }
.t-project { margin-left: 82px; }
.t-chev { width: 20px; height: 16px; color: #9a9da5; }
.t-chev-a { margin-left: 21px; }
.t-branch { width: 30px; height: 38px; margin-left: 71px; }
.t-branch + .t-name { margin-left: 17px; }
.t-chev-b { margin-left: 22px; }
.t-py { width: 38px; height: 38px; margin-left: 160px; }
.t-py + .t-name { margin-left: 18px; }
.t-chev-c { margin-left: 13px; }
.t-run { width: 34px; height: 36px; margin-left: 62px; }
.t-bug { width: 38px; height: 38px; margin-left: 53px; }
.t-dots { width: 8px; height: 36px; margin-left: 63px; }
.t-user { width: 46px; height: 46px; margin-left: 197px; }
.t-search { width: 44px; height: 44px; margin-left: 54px; }
.t-gear { width: 42px; height: 44px; margin-left: 55px; }
.t-min { width: 20px; height: 2px; background: #6f727b; margin-left: 53px; }
.t-restore { width: 24px; height: 24px; margin-left: 89px; }
.t-close { width: 20px; height: 20px; margin-left: 87px; }

/* main area */
.main {
  flex: 1;
  min-height: 0;
  display: flex;
  background: #f7f8fa;
  border-top: 2px solid #ebecf0;
}
.strip-left {
  width: 92px;
  flex: none;
  border-right: 2px solid #ebecf0;
  display: flex;
  flex-direction: column;
  justify-content: space-between;
  align-items: center;
  padding: 12px 8px 30px 0;
}
.strip-group { display: flex; flex-direction: column; align-items: center; }
.strip-active {
  width: 76px;
  height: 76px;
  background: #dfe1e5;
  border-radius: 12px;
  display: flex;
  align-items: center;
  justify-content: center;
}
.s-icon { width: 44px; height: 44px; flex: none; }
.s-commit { width: 50px; height: 34px; margin-top: 45px; }
.s-plug { width: 40px; height: 40px; margin-top: 65px; }
.s-more { width: 40px; height: 8px; margin-top: 74px; }
.s-gap { margin-top: 56px; }

/* project tree */
.project {
  width: 688px;
  flex: none;
  position: relative;
  border-right: 2px solid #ebecf0;
  overflow: hidden;
  font-size: 32.300px;
}
.project-head {
  height: 113px;
  display: flex;
  align-items: center;
  padding: 0 0 12px 40px;
}
.project-title { font-size: 33px; font-weight: 500; }
.p-chev { width: 20px; height: 16px; margin-left: 21px; color: #6c707e; }
.row {
  height: 60px;
  display: flex;
  align-items: center;
  padding-left: 39px;
  white-space: nowrap;
}
.row svg, .row .chev { flex: none; }
.chev { width: 24px; height: 20px; margin-right: 25px; color: #6c707e; }
.ico { width: 34px; height: 34px; margin-right: 13px; overflow: visible; }
.ico-md { width: 40px; height: 22px; margin: 0 8px 0 -1px; }
.bold-name { font-weight: 500; font-size: 33.500px; }
.l2 { padding-left: 87px; }
.l3 { padding-left: 137px; }
.l3 .ico { width: 38px; height: 38px; margin-right: 6px; }
.excluded { background: #fdf4df; }
.changed span { color: #0e3ba5; }
.added span { color: #0a7d0a; }
.selected {
  margin: 0 4px 0 32px;
  padding-left: 105px;
  background: #dfe1e5;
  border-radius: 10px;
}
.project-scroll {
  position: absolute;
  left: 0;
  bottom: 0;
  width: 100%;
  height: 27px;
  background: #e0e0e0;
}

/* editor */
.editor {
  flex: 1;
  min-width: 0;
  background: #fff;
  display: flex;
  flex-direction: column;
}
.tabs {
  position: relative;
  height: 100px;
  flex: none;
  display: flex;
  align-items: center;
  border-bottom: 3px solid #ebecf0;
  font-size: 32.700px;
  white-space: nowrap;
}
.tab-clipped {
  width: 189px;
  margin-left: 2px;
  overflow: hidden;
  display: flex;
  justify-content: flex-end;
  color: #43454a;
}
.tab-clipped span { flex: none; }
.tab-ico { width: 38px; height: 38px; flex: none; }
.tab-ico-a { margin-left: 107px; margin-right: 9px; }
.tab-ico-b { margin-left: 115px; margin-right: 4px; }
.tab-blue { color: #4a5db5; }
.tab-green { color: #0a7d0a; padding-top: 4px; }
.tab-x { width: 20px; height: 20px; margin-left: 27px; flex: none; }
.tab-list { width: 26px; height: 20px; margin-left: 65px; color: #6c707e; flex: none; }
.tab-dots { width: 8px; height: 34px; margin-left: 50px; flex: none; }
.tab-underline {
  position: absolute;
  left: 912px;
  right: 166px;
  bottom: -3px;
  height: 8px;
  border-radius: 0 4px 4px 0;
  background: #a8adbd;
}
.nb-toolbar {
  height: 84px;
  flex: none;
  background: #f7f8fa;
  border-bottom: 3px solid #ebecf0;
  display: flex;
  align-items: flex-start;
  padding-left: 998px;
}
.nb-button {
  width: 169px;
  height: 67px;
  border: 2px solid #d3d5db;
  border-radius: 8px;
  background: #fff;
}
.nb-next { width: 18px; height: 26px; margin: 26px 39px 0 auto; color: #6c707e; }
.notebook {
  position: relative;
  flex: 1;
  min-height: 0;
  display: flex;
  flex-direction: column;
  padding-top: 46px;
}
.inspect {
  position: absolute;
  top: 0;
  left: 1362px;
  width: 270px;
  height: 66px;
  padding: 4px 0 0 24px;
  background: #fff;
  border-radius: 0 0 0 8px;
  display: flex;
  align-items: center;
  font-size: 30px;
  color: #6c707e;
}
.inspect svg { flex: none; }
.in-warn { width: 28px; height: 28px; margin-right: 8px; }
.in-ok { width: 30px; height: 32px; margin: 0 6px 0 26px; }
.in-up { width: 22px; height: 18px; margin-left: 26px; }
.in-down { width: 22px; height: 18px; margin-left: 32px; color: #6c707e; }
.bulb {
  position: absolute;
  left: 283px;
  top: 27px;
  width: 24px;
  height: 40px;
}
.cell-top {
  height: 20px;
  width: 1115px;
  margin-left: 247px;
  background: #f2f2f2;
  border-left: 4px solid #6cb36d;
  flex: none;
}
.cell-line {
  height: 54px;
  width: 1584px;
  flex: none;
  background: #f5f8fe;
  display: flex;
  align-items: center;
  font-family: "DejaVu Sans Mono", monospace;
  white-space: pre;
}
.prompt { width: 176px; text-align: right; font-size: 29px; color: #0e3ba5; }
.lineno { margin-left: 31px; width: 40px; font-size: 29px; color: #aeb3c2; }
.code {
  padding-left: 13px;
  border-left: 4px solid #6cb36d;
  height: 54px;
  line-height: 54px;
  font-family: "DejaVu Sans Mono", monospace;
  font-size: 31.500px;
  color: #111;
}
.sel { background: #a6d2ff; display: inline-block; }
.sel i { font-style: normal; color: #1750eb; }
.exec {
  height: 32px;
  flex: none;
  width: 1337px;
  margin-left: 247px;
  padding-left: 14px;
  background: #f2f2f2;
  border-left: 4px solid #6cb36d;
  font-size: 27.300px;
  line-height: 32px;
  color: #8c8c8c;
}
.out-row {
  height: 40px;
  flex: none;
  margin-top: 45px;
  display: flex;
  align-items: center;
  white-space: pre;
  font-family: "DejaVu Sans Mono", monospace;
}
.out-prompt { margin-left: 69px; width: 231px; font-size: 29px; color: #c9350a; }
.out-text { font-family: inherit; font-size: 31.500px; }
.out-dots { width: 7px; height: 30px; margin-left: 1098px; }
.plot-row { display: flex; align-items: flex-start; margin-top: 44px; padding-left: 204px; }
.plot-fold { width: 20px; height: 16px; margin-top: 12px; margin-right: 8px; color: #6c707e; flex: none; }
.plot { width: 1160px; height: 790px; flex: none; }
.tick text { font: 25px "DejaVu Sans", sans-serif; fill: #262626; }
.margin-mark {
  position: absolute;
  right: 0;
  top: 192px;
  width: 36px;
  height: 5px;
  background: #d9d3ad;
}
.v-scroll {
  position: absolute;
  right: 0;
  top: 970px;
  width: 26px;
  height: 103px;
  background: #e8e8e8;
}
.nb-foot {
  margin-top: auto;
  height: 55px;
  border-top: 3px solid #ebecf0;
  flex: none;
}
.strip-right {
  width: 91px;
  flex: none;
  border-left: 2px solid #ebecf0;
  display: flex;
  flex-direction: column;
  align-items: center;
  padding: 28px 0 0 3px;
}
.r-bell { width: 44px; height: 46px; }
.r-db { width: 40px; height: 44px; margin-top: 54px; }

/* status bar */
.statusbar {
  height: 71px;
  flex: none;
  background: #f7f8fa;
  border-top: 2px solid #ebecf0;
  display: flex;
  align-items: center;
  padding: 0 34px 0 28px;
  font-size: 33px;
  color: #6c707e;
}
.st-left { display: flex; align-items: center; white-space: nowrap; }
.st-box {
  width: 18px;
  height: 20px;
  border: 3px solid #3574f0;
  border-radius: 4px;
  margin-right: 14px;
}
.st-right { margin-left: auto; white-space: nowrap; }
.st-lock { width: 34px; height: 34px; margin-left: 50px; flex: none; }

/* windows taskbar */
.taskbar {
  position: relative;
  height: 87px;
  flex: none;
  background: linear-gradient(90deg, #1b242d 0%, #1c2530 38%, #37163f 58%, #3a1638 100%);
  border-top: 1px solid #4a4a55;
  display: flex;
  align-items: center;
  padding: 7px 0 0 9px;
}
.tb-apps {
  display: grid;
  grid-template-columns: 92px 92px 88px 85px 90px 87px 90px 87px 88px 86px 92px 86px 90px 86px 88px 89px 87px 98px 88px 56px;
}
.tb-slot { position: relative; width: 56px; height: 56px; }
.tb-slot svg { width: 56px; height: 56px; display: block; }
.ide-text { font: bold 15px "Liberation Mono", monospace; fill: #fff; }
.word-text { font: bold 19px "Liberation Sans", sans-serif; fill: #fff; }
.zoom-text { font: 13px "Liberation Sans", sans-serif; fill: #fff; text-anchor: middle; }
.tb-temp {
  position: absolute;
  left: 21px;
  top: -6px;
  width: 46px;
  height: 32px;
  border-radius: 16px;
  background: #2b2b2b;
  color: #fff;
  font: 20px/32px "Open Sans", sans-serif;
  text-align: center;
}
.tb-badge {
  position: absolute;
  border-radius: 50%;
  background: #dca7e8;
  color: #1c1c1c;
  text-align: center;
  font: 20px/38px "Open Sans", sans-serif;
  top: -12px;
}
.tb-badge-a { left: 30px; width: 32px; height: 38px; }
.tb-badge-b { left: 24px; width: 42px; height: 38px; }
.tb-run {
  position: absolute;
  left: 22px;
  bottom: -12px;
  width: 11px;
  height: 6px;
  border-radius: 3px;
  background: #8f8f96;
}
.tb-run-zoom { left: 14px; width: 26px; background: #e2a4ea; bottom: -14px; }
.tb-active::before {
  content: "";
  position: absolute;
  inset: -14px -8px -18px -8px;
  border-radius: 10px;
  background: rgba(255, 255, 255, .08);
}
.tb-active svg { position: relative; }
.tb-sep { position: absolute; top: 0; bottom: 0; width: 1px; background: #5b3a5e; }
.tb-sep-a { left: 1589px; }
.tb-sep-b { left: 1773px; }
.tray {
  margin-left: auto;
  display: flex;
  align-items: center;
  padding-right: 33px;
  color: #fff;
}
.tray svg { flex: none; }
.tr-up { width: 20px; height: 14px; }
.tr-m { width: 28px; height: 30px; margin-left: 38px; }
.tr-sl { width: 30px; height: 30px; margin-left: 37px; }
.tr-bt { width: 24px; height: 32px; margin-left: 36px; }
.tr-mic { width: 44px; height: 34px; margin-left: 31px; }
.tr-wifi { width: 34px; height: 26px; margin-left: 23px; }
.tr-vol { width: 34px; height: 28px; margin-left: 13px; }
.tr-bat { width: 32px; height: 22px; margin-left: 17px; }
.tr-clock {
  width: 155px;
  margin-left: 1px;
  display: flex;
  flex-direction: column;
  align-items: flex-end;
  font: 23px/32px "Open Sans", sans-serif;
  white-space: nowrap;
}
.tr-bell { width: 28px; height: 32px; margin-left: 18px; }

/* zoom annotation bar */
.annot {
  position: absolute;
  left: 548px;
  top: 180px;
  width: 1424px;
  height: 86px;
  border-radius: 12px;
  background: #3c3e3d;
  display: grid;
  grid-template-columns: 110px 110px 110px 110px 110px 140px 110px 92px 108px 110px 110px 110px;
  padding-left: 15px;
}
.an-item {
  display: flex;
  flex-direction: column;
  align-items: center;
  padding-top: 14px;
  color: #fff;
  font: 600 18px/24px "Open Sans", sans-serif;
}
.an-item svg { width: 36px; height: 36px; flex: none; margin-bottom: 4px; }
.an-item .an-save { width: 50px; }
.an-t {
  height: 36px;
  margin-bottom: 4px;
  font: bold 44px/36px "Liberation Serif", serif;
}
.an-draw { color: #ffa200; }
.an-swatch {
  width: 34px;
  height: 34px;
  margin-bottom: 6px;
  border: 2px solid #fff;
  border-radius: 8px;
  background: #52d9ed;
  flex: none;
}
.an-close {
  position: absolute;
  left: 1379px;
  top: 16px;
  width: 32px;
  height: 32px;
}
.annot-tip {
  position: absolute;
  left: 1006px;
  top: 266px;
  width: 508px;
  height: 48px;
  background: #3c3e3d;
  border-radius: 0 0 14px 14px;
  display: flex;
  align-items: center;
  padding-left: 34px;
  color: #fff;
  font: 700 22.600px "Open Sans", sans-serif;
  white-space: nowrap;
}
.annot-tip svg { width: 32px; height: 32px; margin-right: 11px; flex: none; }

/* zoom share banner */
.share-banner {
  position: absolute;
  left: 884px;
  top: 1434px;
  width: 680px;
  height: 45px;
  display: flex;
  border-radius: 14px 14px 0 0;
  overflow: hidden;
}
.share-green {
  width: 486px;
  background: #24db5b;
  display: flex;
  align-items: center;
  padding: 0 0 3px 24px;
  color: #0e3316;
  font: 700 23px "Open Sans", sans-serif;
  white-space: nowrap;
}
.share-arrow { width: 22px; height: 26px; flex: none; }
.share-text { margin-left: 62px; }
.share-shield { width: 24px; height: 28px; margin-left: auto; margin-right: 21px; flex: none; }
.share-red {
  flex: 1;
  background: #e32b2b;
  display: flex;
  align-items: center;
  padding: 0 0 3px 16px;
  color: #fff;
  font: 700 21px "Open Sans", sans-serif;
  white-space: nowrap;
}
.share-stop {
  width: 16px;
  height: 18px;
  margin: 0 14px 6px 0;
  border-radius: 2px;
  background: #f3f8f8;
}

/* zoom bottom toolbar */
.zoom-bar {
  position: absolute;
  left: 148px;
  top: 1479px;
  width: 2152px;
  height: 105px;
  background: #232527;
  border-top: 2px solid #55575a;
  border-radius: 24px 24px 0 0;
  display: grid;
  grid-template-columns: 152px 200px 136px 282px 174px 154px 156px 196px 132px 254px 144px 162px;
  padding-left: 15px;
}
.zb-item {
  position: relative;
  display: flex;
  flex-direction: column;
  align-items: center;
  padding-top: 15px;
  color: #b3b3b3;
  font: 24px/32px "Open Sans", sans-serif;
  white-space: nowrap;
}
.zb-item > svg:first-child { width: 44px; height: 44px; flex: none; margin-bottom: 6px; }
.zb-item > .zb-wide { width: 56px; }
.zb-green { color: #22db5a; }
.zb-caret { position: absolute; top: 27px; width: 14px; height: 10px; }
.zc-mute { left: calc(50% + 51px); }
.zc-video { left: calc(50% + 58px); }
.zc-part { left: calc(50% + 97px); }
.zc-chat { left: calc(50% + 61px); }
.zc-new { left: calc(50% + 54px); }
.zc-apps { left: calc(50% + 50px); }
.zb-count { position: absolute; top: 12px; left: calc(50% + 34px); font-size: 22px; }
```
